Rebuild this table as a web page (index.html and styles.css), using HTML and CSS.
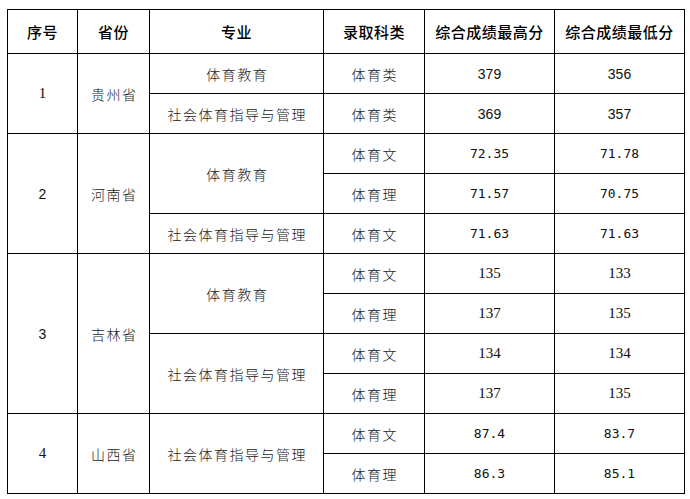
FILE: index.html
```html
<!DOCTYPE html>
<html lang="zh">
<head>
<meta charset="utf-8">
<title>录取成绩</title>
<link rel="stylesheet" href="styles.css">
</head>
<body>
<table class="score-table">
  <colgroup>
    <col class="c-no">
    <col class="c-prov">
    <col class="c-major">
    <col class="c-type">
    <col class="c-max">
    <col class="c-min">
  </colgroup>
  <thead>
    <tr class="head-row">
      <th>序号</th>
      <th>省份</th>
      <th>专业</th>
      <th>录取科类</th>
      <th>综合成绩最高分</th>
      <th>综合成绩最低分</th>
    </tr>
  </thead>
  <tbody>
    <tr>
      <td rowspan="2" class="serif">1</td>
      <td rowspan="2" class="cjk">贵州省</td>
      <td class="cjk">体育教育</td>
      <td class="cjk">体育类</td>
      <td class="sans">379</td>
      <td class="sans">356</td>
    </tr>
    <tr>
      <td class="cjk">社会体育指导与管理</td>
      <td class="cjk">体育类</td>
      <td class="sans">369</td>
      <td class="sans">357</td>
    </tr>
    <tr>
      <td rowspan="3" class="sans">2</td>
      <td rowspan="3" class="cjk">河南省</td>
      <td rowspan="2" class="cjk">体育教育</td>
      <td class="cjk">体育文</td>
      <td class="mono">72.35</td>
      <td class="mono">71.78</td>
    </tr>
    <tr>
      <td class="cjk">体育理</td>
      <td class="mono">71.57</td>
      <td class="mono">70.75</td>
    </tr>
    <tr>
      <td class="cjk">社会体育指导与管理</td>
      <td class="cjk">体育文</td>
      <td class="mono">71.63</td>
      <td class="mono">71.63</td>
    </tr>
    <tr>
      <td rowspan="4" class="sans">3</td>
      <td rowspan="4" class="cjk">吉林省</td>
      <td rowspan="2" class="cjk">体育教育</td>
      <td class="cjk">体育文</td>
      <td class="serif">135</td>
      <td class="serif">133</td>
    </tr>
    <tr>
      <td class="cjk">体育理</td>
      <td class="serif">137</td>
      <td class="serif">135</td>
    </tr>
    <tr>
      <td rowspan="2" class="cjk">社会体育指导与管理</td>
      <td class="cjk">体育文</td>
      <td class="serif">134</td>
      <td class="serif">134</td>
    </tr>
    <tr>
      <td class="cjk">体育理</td>
      <td class="serif">137</td>
      <td class="serif">135</td>
    </tr>
    <tr>
      <td rowspan="2" class="serif">4</td>
      <td rowspan="2" class="cjk">山西省</td>
      <td rowspan="2" class="cjk">社会体育指导与管理</td>
      <td class="cjk">体育文</td>
      <td class="mono">87.4</td>
      <td class="mono">83.7</td>
    </tr>
    <tr>
      <td class="cjk">体育理</td>
      <td class="mono">86.3</td>
      <td class="mono">85.1</td>
    </tr>
  </tbody>
</table>
</body>
</html>
```

FILE: styles.css
```css
html, body {
  margin: 0;
  background: #ffffff;
}

body {
  padding: 9px 0 0 7px;
  font-family: "Noto Sans CJK SC", "Liberation Sans", sans-serif;
  color: #000;
}

.score-table {
  border-collapse: collapse;
  table-layout: fixed;
  width: 677px;
}

.c-no { width: 70px; }
.c-prov { width: 72px; }
.c-major { width: 174px; }
.c-type { width: 101px; }
.c-max { width: 130px; }
.c-min { width: 130px; }

.score-table th,
.score-table td {
  border: 1px solid #000;
  padding: 0;
  text-align: center;
  vertical-align: middle;
  line-height: 1;
}

.head-row {
  height: 44px;
}

.score-table th {
  font-family: "Noto Sans CJK SC", sans-serif;
  font-weight: 500;
  font-size: 15px;
  letter-spacing: 0.5px;
  color: #000;
}

.score-table tbody tr {
  height: 40px;
}

.cjk {
  font-family: "Noto Sans CJK SC", sans-serif;
  font-weight: 300;
  font-size: 14px;
  letter-spacing: 1.5px;
  color: #1a1a1a;
  padding-top: 2px;
}

.score-table td.cjk {
  padding-left: 1.5px;
}

.serif {
  font-family: "Liberation Serif", serif;
  font-size: 15px;
  color: #111;
}

.sans {
  font-family: "Liberation Sans", sans-serif;
  font-size: 14px;
  color: #111;
}

.mono {
  font-family: "DejaVu Sans Mono", "Liberation Mono", monospace;
  font-size: 13px;
  color: #111;
}
```
